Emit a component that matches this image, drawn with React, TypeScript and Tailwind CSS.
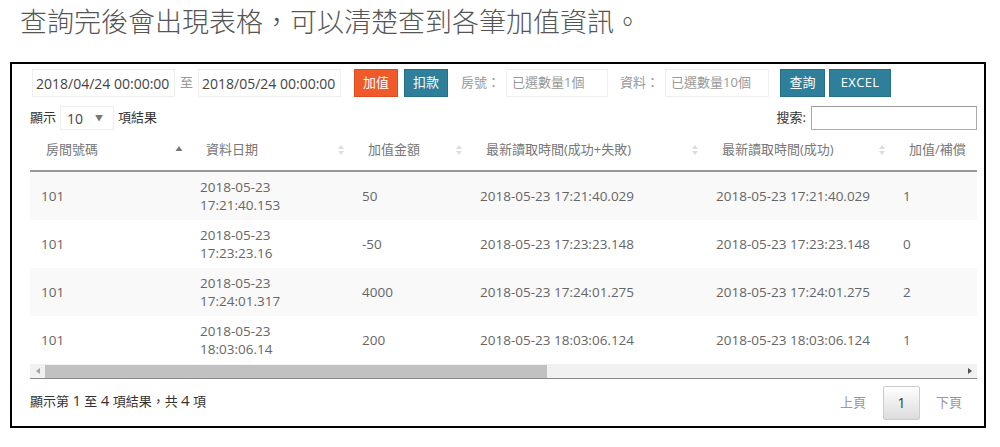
import React from 'react';

const rows = [
  { room: '101', date: '2018-05-23', time: '17:21:40.153', amount: '50', readAll: '2018-05-23 17:21:40.029', readOk: '2018-05-23 17:21:40.029', kind: '1' },
  { room: '101', date: '2018-05-23', time: '17:23:23.16', amount: '-50', readAll: '2018-05-23 17:23:23.148', readOk: '2018-05-23 17:23:23.148', kind: '0' },
  { room: '101', date: '2018-05-23', time: '17:24:01.317', amount: '4000', readAll: '2018-05-23 17:24:01.275', readOk: '2018-05-23 17:24:01.275', kind: '2' },
  { room: '101', date: '2018-05-23', time: '18:03:06.14', amount: '200', readAll: '2018-05-23 18:03:06.124', readOk: '2018-05-23 18:03:06.124', kind: '1' },
];

const columns = [
  { label: '房間號碼', w: 'w-[160px]', sort: 'asc' },
  { label: '資料日期', w: 'w-[162px]', sort: 'both' },
  { label: '加值金額', w: 'w-[118px]', sort: 'both' },
  { label: '最新讀取時間(成功+失敗)', w: 'w-[236px]', sort: 'both' },
  { label: '最新讀取時間(成功)', w: 'w-[187px]', sort: 'both' },
  { label: '加值/補償', w: 'w-[200px]', sort: 'both' },
];

function SortIcon({ kind }: { kind: string }) {
  if (kind === 'asc') {
    return (
      <svg width="8" height="10" viewBox="0 0 8 10" className="shrink-0">
        <path d="M4 1 L7.5 6 L0.5 6 Z" fill="#777" />
      </svg>
    );
  }
  return (
    <svg width="8" height="12" viewBox="0 0 8 12" className="shrink-0">
      <path d="M4 1 L7 5 L1 5 Z" fill="#ddd" />
      <path d="M4 11 L7 7 L1 7 Z" fill="#ddd" />
    </svg>
  );
}

export default function App() {
  return (
    <div className="w-[1000px] h-[447px] bg-white overflow-hidden font-['Open_Sans','Noto_Sans_CJK_TC',sans-serif] text-[#555]">
      <div className="pt-[3px] pl-[20px] text-[27px] leading-[36px] text-[#555] font-['Noto_Sans_CJK_TC',sans-serif] font-light">
        查詢完後會出現表格，可以清楚查到各筆加值資訊。
      </div>

      <div className="mt-[23px] ml-[10px] w-[976px] h-[366px] border-2 border-black pl-[18px] pr-[7px] flex flex-col">
        {/* toolbar */}
        <div className="mt-[5px] ml-[2px] flex items-center h-[28px] text-[14px]">
          <div className="h-[28px] w-[143px] border border-[#eee] flex items-center pl-[3px] text-[#444]">2018/04/24 00:00:00</div>
          <span className="mx-[5px] text-[#999] text-[13px]">至</span>
          <div className="h-[28px] w-[143px] border border-[#eee] flex items-center pl-[3px] text-[#444]">2018/05/24 00:00:00</div>
          <button className="ml-[13px] h-[28px] w-[44px] bg-[#f05a2a] border border-[#e04a20] text-white text-[13px]">加值</button>
          <button className="ml-[6px] h-[28px] w-[44px] bg-[#2e7f99] border border-[#276f87] text-white text-[13px]">扣款</button>
          <span className="ml-[13px] text-[#999] text-[13px]">房號：</span>
          <div className="ml-[6px] h-[28px] w-[102px] border border-[#eee] flex items-center pl-[5px] text-[#999] text-[13px]">已選數量1個</div>
          <span className="ml-[12px] text-[#999] text-[13px]">資料：</span>
          <div className="ml-[6px] h-[28px] w-[104px] border border-[#eee] flex items-center pl-[5px] text-[#999] text-[13px]">已選數量10個</div>
          <button className="ml-[11px] h-[28px] w-[45px] bg-[#2e7f99] border border-[#276f87] text-white text-[13px]">查詢</button>
          <button className="ml-[4px] h-[28px] w-[62px] bg-[#2e7f99] border border-[#276f87] text-white text-[13px] tracking-wide">EXCEL</button>
        </div>

        {/* length + search */}
        <div className="mt-[9px] h-[24px] flex items-center justify-between text-[13px] text-[#333]">
          <div className="flex items-center">
            <span>顯示</span>
            <div className="ml-[4px] h-[24px] w-[54px] border border-[#eee] flex items-center pl-[6px] text-[14px] text-[#444]">
              10<span className="ml-[12px] text-[8px] text-[#777]">▼</span>
            </div>
            <span className="ml-[4px]">項結果</span>
          </div>
          <div className="flex items-center">
            <span>搜索:</span>
            <div className="ml-[5px] h-[24px] w-[166px] border border-[#aaa] border-t-[#999]" />
          </div>
        </div>

        {/* table */}
        <div className="overflow-hidden">
          <div className="w-[1400px]">
            <div className="flex h-[42px] border-b-2 border-[#999] text-[13px] text-[#777]">
              {columns.map((c) => (
                <div key={c.label} className={`${c.w} flex items-center justify-between pl-[16px] pr-[7px]`}>
                  <span>{c.label}</span>
                  <SortIcon kind={c.sort} />
                </div>
              ))}
            </div>
            {rows.map((r, i) => (
              <div key={i} className={`flex h-[48px] text-[13.5px] text-[#666] ${i % 2 === 0 ? 'bg-[#f9f9f9]' : 'bg-white'}`}>
                <div className="w-[160px] flex items-center pl-[11px]">{r.room}</div>
                <div className="w-[162px] flex flex-col justify-center pl-[10px] leading-[18px]">
                  <span>{r.date}</span>
                  <span>{r.time}</span>
                </div>
                <div className="w-[118px] flex items-center pl-[10px]">{r.amount}</div>
                <div className="w-[236px] flex items-center pl-[10px]">{r.readAll}</div>
                <div className="w-[187px] flex items-center pl-[10px]">{r.readOk}</div>
                <div className="w-[200px] flex items-center pl-[10px]">{r.kind}</div>
              </div>
            ))}
          </div>
        </div>

        {/* fake horizontal scrollbar */}
        <div className="h-[15px] bg-[#f1f1f1] border-b border-[#888] flex items-center">
          <div className="w-[15px] flex justify-center">
            <svg width="4" height="6" viewBox="0 0 4 6"><path d="M4 0 L0 3 L4 6 Z" fill="#a3a3a3" /></svg>
          </div>
          <div className="w-[502px] h-[13px] bg-[#c1c1c1]" />
          <div className="flex-1" />
          <div className="w-[15px] flex justify-center">
            <svg width="4" height="6" viewBox="0 0 4 6"><path d="M0 0 L4 3 L0 6 Z" fill="#505050" /></svg>
          </div>
        </div>

        {/* footer */}
        <div className="flex-1 flex items-center justify-between pr-[15px]">
          <div className="text-[13px] text-[#333] -mt-[4px]">
            顯示第 <span className="text-[15px]">1</span> 至 <span className="text-[15px]">4</span> 項結果，共 <span className="text-[15px]">4</span> 項
          </div>
          <div className="flex items-center text-[13px] text-[#999]">
            <span>上頁</span>
            <div className="ml-[17px] w-[37px] h-[34px] rounded-[2px] border border-[#ccc] bg-gradient-to-b from-white to-[#dcdcdc] flex items-center justify-center text-[#333] text-[14px]">1</div>
            <span className="ml-[16px]">下頁</span>
          </div>
        </div>
      </div>
    </div>
  );
}
